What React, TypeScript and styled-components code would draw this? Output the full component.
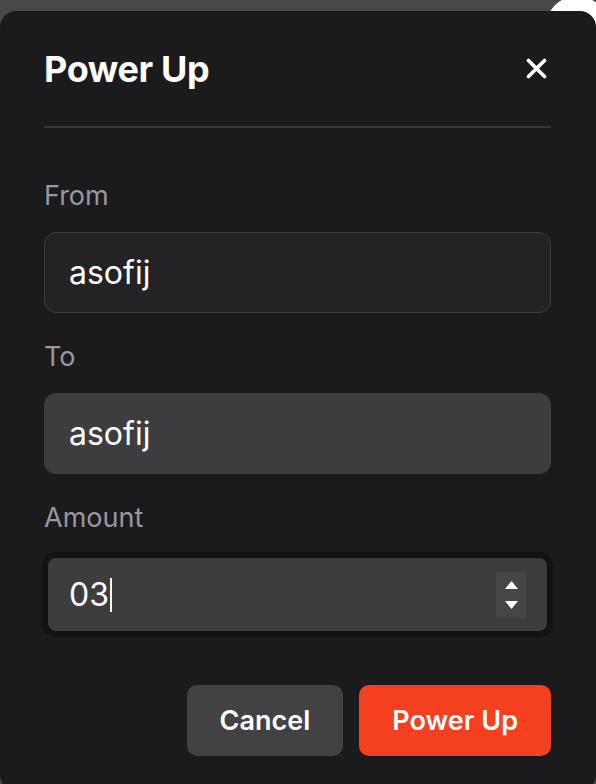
import React from "react";
import styled, { createGlobalStyle } from "styled-components";

const GlobalStyle = createGlobalStyle`
  html, body {
    margin: 0;
    padding: 0;
    background: #48484a;
    font-family: Inter, "Noto Sans", "Liberation Sans", sans-serif;
    -webkit-font-smoothing: antialiased;
  }
  #root {
    position: relative;
    width: 596px;
    height: 784px;
    overflow: hidden;
  }
`;

const Avatar = styled.div`
  position: absolute;
  top: -4px;
  left: 546px;
  width: 62px;
  height: 62px;
  border-radius: 50%;
  background: #ffffff;
`;

const Modal = styled.div`
  position: relative;
  margin-top: 11px;
  width: 596px;
  height: 780px;
  box-sizing: border-box;
  padding: 38px 45px 0 44px;
  background: #1b1b1d;
  border-radius: 16px;
  display: flex;
  flex-direction: column;
`;

const Header = styled.div`
  display: flex;
  align-items: center;
  justify-content: space-between;
  height: 40px;
`;

const Title = styled.h2`
  margin: 0;
  font-size: 36px;
  line-height: 40px;
  font-weight: 700;
  color: #ffffff;
  letter-spacing: -0.4px;
`;

const CloseButton = styled.button`
  display: flex;
  align-items: center;
  justify-content: center;
  width: 24px;
  height: 24px;
  margin-right: 3px;
  margin-top: -2px;
  padding: 0;
  border: none;
  background: transparent;
  cursor: pointer;
`;

const Divider = styled.hr`
  margin: 37px 0 0;
  border: none;
  height: 2px;
  background: #38383b;
`;

const Body = styled.div`
  display: flex;
  flex-direction: column;
  gap: 28px;
  padding-top: 52px;
`;

const Field = styled.div`
  display: flex;
  flex-direction: column;
  gap: 20px;
`;

const Label = styled.label`
  font-size: 27px;
  line-height: 32px;
  color: #98989e;
`;

type Variant = "outlined" | "filled" | "focused";

const InputBox = styled.div<{ $variant: Variant }>`
  position: relative;
  display: flex;
  align-items: center;
  height: 81px;
  box-sizing: border-box;
  padding: 0 24px;
  border-radius: 12px;
  border: 1px solid
    ${(p) =>
      p.$variant === "outlined"
        ? "#3c3c40"
        : p.$variant === "focused"
        ? "#121213"
        : "transparent"};
  background: ${(p) => (p.$variant === "outlined" ? "#232326" : "#3d3d3f")};
  box-shadow: ${(p) =>
    p.$variant === "focused"
      ? "inset 0 0 0 3px #121213, 0 0 0 2px #121213"
      : "none"};
  font-size: 32px;
  line-height: 40px;
  color: #ffffff;
`;

const Caret = styled.span`
  display: inline-block;
  width: 2px;
  height: 34px;
  margin-left: 1px;
  background: #ffffff;
`;

const Spinner = styled.div`
  position: absolute;
  right: 24px;
  top: 50%;
  transform: translateY(-50%);
  width: 30px;
  height: 46px;
  background: #454547;
  display: flex;
  flex-direction: column;
  align-items: center;
  justify-content: center;
  gap: 12px;
`;

const Footer = styled.div`
  display: flex;
  justify-content: flex-end;
  gap: 16px;
  margin-top: 50px;
`;

const Button = styled.button<{ $primary?: boolean }>`
  height: 71px;
  padding: 0 33px;
  border: none;
  border-radius: 10px;
  background: ${(p) => (p.$primary ? "#f4401f" : "#424244")};
  color: #ffffff;
  font-family: inherit;
  font-size: 27px;
  font-weight: 600;
  cursor: pointer;
`;

const CloseIcon = () => (
  <svg width="21" height="21" viewBox="0 0 21 21">
    <path
      d="M2.5 2.5 L18.5 18.5 M18.5 2.5 L2.5 18.5"
      stroke="#ffffff"
      strokeWidth="3.6"
      strokeLinecap="round"
    />
  </svg>
);

const Triangle = ({ up }: { up?: boolean }) => (
  <svg width="13" height="8" viewBox="0 0 13 8">
    <path d={up ? "M6.5 0 L13 8 L0 8 Z" : "M0 0 L13 0 L6.5 8 Z"} fill="#ffffff" />
  </svg>
);

export default function App() {
  return (
    <>
      <GlobalStyle />
      <Avatar />
      <Modal>
        <Header>
          <Title>Power Up</Title>
          <CloseButton aria-label="Close">
            <CloseIcon />
          </CloseButton>
        </Header>
        <Divider />
        <Body>
          <Field>
            <Label>From</Label>
            <InputBox $variant="outlined">asofij</InputBox>
          </Field>
          <Field>
            <Label>To</Label>
            <InputBox $variant="filled">asofij</InputBox>
          </Field>
          <Field>
            <Label>Amount</Label>
            <InputBox $variant="focused">
              03
              <Caret />
              <Spinner>
                <Triangle up />
                <Triangle />
              </Spinner>
            </InputBox>
          </Field>
        </Body>
        <Footer>
          <Button>Cancel</Button>
          <Button $primary>Power Up</Button>
        </Footer>
      </Modal>
    </>
  );
}
